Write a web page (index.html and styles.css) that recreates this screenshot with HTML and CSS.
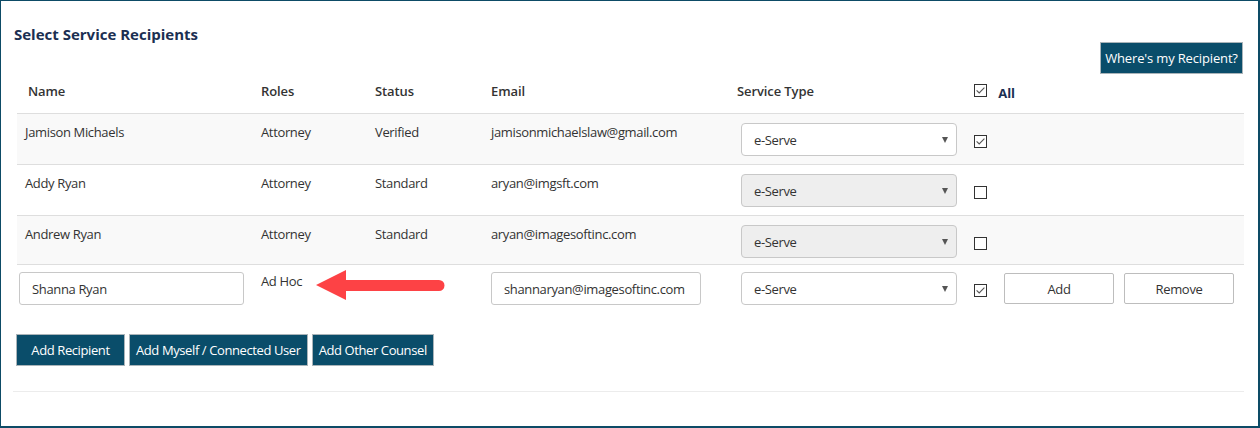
FILE: index.html
```html
<!DOCTYPE html>
<html lang="en">
<head>
<meta charset="UTF-8">
<title>Select Service Recipients</title>
<link rel="stylesheet" href="styles.css">
</head>
<body>

<div class="panel">
  <!-- Title bar -->
  <div class="topbar">
    <h2 class="title">Select Service Recipients</h2>
    <button class="btn-dark btn-where">Where's my Recipient?</button>
  </div>

  <!-- Recipients table -->
  <table class="recipients">
    <colgroup>
      <col class="c-name"><col class="c-role"><col class="c-status"><col class="c-email"><col class="c-type"><col class="c-check">
    </colgroup>
    <thead>
      <tr>
        <th class="th-name">Name</th>
        <th>Roles</th>
        <th>Status</th>
        <th>Email</th>
        <th class="th-type">Service Type</th>
        <th class="th-all">
          <svg class="cb" width="13" height="13" viewBox="0 0 13 13"><rect x="0.5" y="0.5" width="12" height="12" fill="#fff" stroke="#333"/><polyline points="2.6,6.4 5.2,9 10.4,3.6" fill="none" stroke="#555" stroke-width="1.1"/></svg>
          <span class="all">All</span>
        </th>
      </tr>
    </thead>
    <tbody>
      <tr class="shade">
        <td>Jamison Michaels</td>
        <td>Attorney</td>
        <td>Verified</td>
        <td>jamisonmichaelslaw@gmail.com</td>
        <td><div class="sel"><select><option>e-Serve</option></select></div></td>
        <td><svg class="cb" width="13" height="13" viewBox="0 0 13 13"><rect x="0.5" y="0.5" width="12" height="12" fill="#fff" stroke="#333"/><polyline points="2.6,6.4 5.2,9 10.4,3.6" fill="none" stroke="#555" stroke-width="1.1"/></svg></td>
      </tr>
      <tr>
        <td>Addy Ryan</td>
        <td>Attorney</td>
        <td>Standard</td>
        <td>aryan@imgsft.com</td>
        <td><div class="sel"><select disabled><option>e-Serve</option></select></div></td>
        <td><svg class="cb" width="13" height="13" viewBox="0 0 13 13"><rect x="0.5" y="0.5" width="12" height="12" fill="#fff" stroke="#333"/></svg></td>
      </tr>
      <tr class="shade short">
        <td>Andrew Ryan</td>
        <td>Attorney</td>
        <td>Standard</td>
        <td>aryan@imagesoftinc.com</td>
        <td><div class="sel"><select disabled><option>e-Serve</option></select></div></td>
        <td><svg class="cb" width="13" height="13" viewBox="0 0 13 13"><rect x="0.5" y="0.5" width="12" height="12" fill="#fff" stroke="#333"/></svg></td>
      </tr>
      <tr class="adhoc">
        <td class="td-name"><input class="field name-field" value="Shanna Ryan"></td>
        <td class="td-role">
          Ad Hoc
          <!-- callout arrow -->
          <svg class="arrow" width="130" height="30" viewBox="0 0 130 30"><path d="M0 15 L30 0 L30 10 L123 10 A5.5 5.5 0 0 1 123 21 L30 21 L30 30 Z" fill="#fd4245"/></svg>
        </td>
        <td></td>
        <td><input class="field email-field" value="shannaryan@imagesoftinc.com"></td>
        <td><div class="sel"><select><option>e-Serve</option></select></div></td>
        <td>
          <div class="row-actions">
            <svg class="cb" width="13" height="13" viewBox="0 0 13 13"><rect x="0.5" y="0.5" width="12" height="12" fill="#fff" stroke="#333"/><polyline points="2.6,6.4 5.2,9 10.4,3.6" fill="none" stroke="#555" stroke-width="1.1"/></svg>
            <button class="btn-light">Add</button>
            <button class="btn-light">Remove</button>
          </div>
        </td>
      </tr>
    </tbody>
  </table>

  <!-- Bottom actions -->
  <div class="actions">
    <button class="btn-dark btn-first">Add Recipient</button>
    <button class="btn-dark">Add Myself / Connected User</button>
    <button class="btn-dark">Add Other Counsel</button>
  </div>
  <div class="rule"></div>
</div>

</body>
</html>
```

FILE: styles.css
```css
body{margin:0;font-family:"Open Sans",Arial,sans-serif;font-size:13px;letter-spacing:-0.35px;color:#333;background:#fff}
.panel{box-sizing:border-box;width:1260px;height:428px;border:1px solid #0d4b66;border-right-width:2px;border-bottom-width:2px;padding:23px 16px 0 15px}
/* Title bar */
.topbar{display:flex;justify-content:space-between;align-items:flex-start}
.title{margin:0 0 0 -2px;font-size:15px;line-height:20px;font-weight:700;letter-spacing:0;color:#1b2f52}
.btn-dark{background:#0a4d6a;color:#fff;border:1px solid #aab4b9;font-family:inherit;font-size:13px;font-weight:400;letter-spacing:-0.4px;height:32px;padding:0 6px;cursor:pointer}
.btn-where{margin-top:18px;height:32px;width:143px;padding:0;margin-right:-1px;letter-spacing:-0.15px}
.btn-first{width:109px}
/* Table */
.recipients{width:1227px;margin-left:1px;border-collapse:collapse;table-layout:fixed}
.c-name{width:236px}
.c-role{width:114px}
.c-status{width:116px}
.c-email{width:250px}
.c-type{width:233px}
.recipients th{height:26px;padding:0 8px 13px;text-align:left;vertical-align:bottom;font-weight:600;letter-spacing:-0.1px;line-height:18px;border-bottom:1px solid #dedede}
.recipients th.th-name{padding-left:11px}
.recipients th.th-type{padding-left:4px}
.th-all{white-space:nowrap}
.th-all .cb{vertical-align:-1px;margin-right:8px}
.all{color:#1b2f52;font-weight:700;position:relative;top:2px}
.recipients td{padding:9px 8px 8px;vertical-align:top;line-height:18px;border-bottom:1px solid #dedede}
.recipients tr.shade td{background:#f9f9f9}
.recipients tr.short td{padding-bottom:6px}
.recipients td .cb{display:block;margin-top:12px}
.recipients tr.adhoc td{padding-top:7px;padding-bottom:0;border-bottom:none}
.recipients td.td-name{padding-left:2px}
.recipients td.td-role{position:relative}
.arrow{position:absolute;left:63px;top:5px}
/* Form controls */
.field{box-sizing:border-box;height:33px;border:1px solid #c8c8c8;border-radius:3px;padding:0 12px;font-family:inherit;font-size:13px;letter-spacing:-0.35px;color:#333;background:#fff}
.name-field{width:225px}
.email-field{width:210px}
.sel{position:relative;width:216px}
.sel select{box-sizing:border-box;width:100%;height:33px;border:1px solid #c8c8c8;border-radius:4px;padding:0 12px;font-family:inherit;font-size:13px;letter-spacing:-0.35px;color:#333;background:#fff;-webkit-appearance:none;appearance:none}
.sel select:disabled{background:#eeeeee;color:#333;opacity:1}
.sel:after{content:'';position:absolute;right:9px;top:14px;width:0;height:0;border-left:3px solid transparent;border-right:3px solid transparent;border-top:6px solid #555;pointer-events:none}
.row-actions{display:flex;align-items:flex-start;gap:10px}
.row-actions .cb{margin-top:11px;margin-right:7px}
.btn-light{width:110px;height:31px;margin-top:1px;background:#fff;border:1px solid #bdbdbd;border-radius:2px;font-family:inherit;font-size:13px;letter-spacing:-0.3px;color:#333;cursor:pointer}
/* Bottom */
.actions{display:flex;gap:4px;margin-top:29px;margin-left:0}
.rule{height:1px;background:#ececec;margin:25px -2px 0 -3px}
```
